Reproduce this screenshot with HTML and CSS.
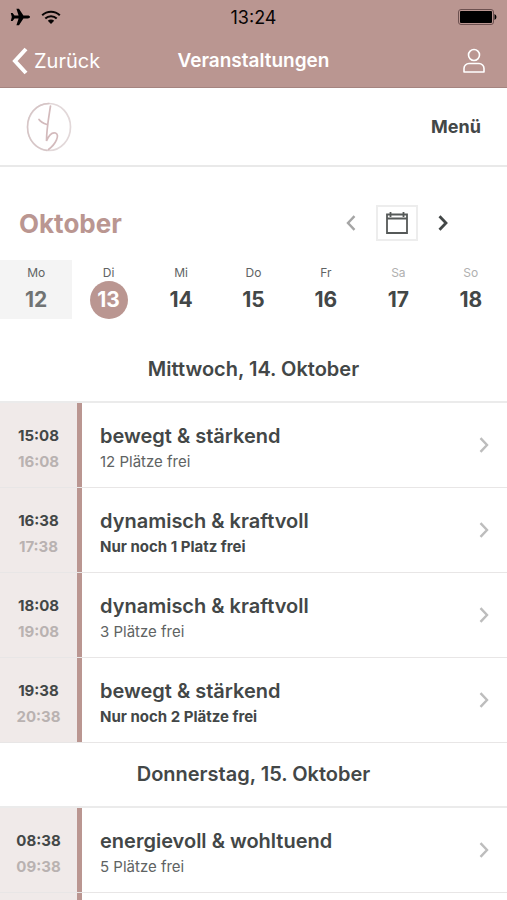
FILE: index.html
```html
<!DOCTYPE html>
<html lang="de">
<head>
<meta charset="utf-8">
<meta name="viewport" content="width=device-width, initial-scale=1">
<title>Veranstaltungen</title>
<link rel="stylesheet" href="styles.css">
</head>
<body>
<header class="app-header">
  <div class="status-bar">
    <div class="status-icons">
      <svg width="21" height="18" viewBox="0 0 21 18" aria-hidden="true"><path d="M20 9c0-.8-1-1.400-2.200-1.400h-4.400L9 .8H6.400l2.200 6.800H4.500L2.600 5H.8l1 4-1 4h1.800l1.900-2.600h4.100L6.400 17.200H9l4.400-6.800h4.400C19 10.400 20 9.800 20 9z"/></svg>
      <svg width="20" height="16" viewBox="0 0 20 16" fill="none" stroke="#080404" stroke-width="2" aria-hidden="true"><path d="M1.200 6.300a12.500 12.500 0 0 1 17.600 0M4.300 9.500a8.100 8.100 0 0 1 11.400 0"/><path d="M10 15l-3.200-3.300a4.600 4.600 0 0 1 6.400 0z" fill="#080404" stroke="none"/></svg>
    </div>
    <span class="clock">13:24</span>
    <svg class="battery" width="39" height="16" viewBox="0 0 39 16" aria-hidden="true"><rect x=".5" y=".5" width="35" height="15" rx="2.500" fill="none" stroke="#6d5150"/><rect x="2" y="2" width="32" height="12" rx="1"/><path d="M36.500 5q2 1 2 3t-2 3z"/></svg>
  </div>
  <nav class="nav-bar">
    <a class="back" href="#">
      <svg width="16" height="28" viewBox="0 0 16 28" fill="none" stroke="#fff" stroke-width="4" aria-hidden="true"><path d="M14 2L3 14l11 12"/></svg>
      Zurück
    </a>
    <h1 class="nav-title">Veranstaltungen</h1>
    <button class="profile" type="button" aria-label="Profil">
      <svg width="22" height="26" viewBox="0 0 22 26" fill="none" stroke="#fff" stroke-width="1.600" aria-hidden="true"><circle cx="11" cy="7" r="5.500"/><path d="M1 24v-3.500A5 5 0 0 1 6 15.500h10a5 5 0 0 1 5 5V24z" stroke-linejoin="round"/></svg>
    </button>
  </nav>
</header>

<div class="site-header">
  <a class="logo" href="#" aria-label="Startseite">
    <svg width="46" height="50" viewBox="0 0 46 50" fill="none" stroke-linecap="round" aria-hidden="true"><ellipse cx="23" cy="25" rx="21.500" ry="23.500" stroke="#e2d8d9" stroke-width="1.700"/><path d="M23 1.500C9 2 1.500 13 1.500 25S9 47 21 48.500" stroke="#d6c5c6" stroke-width="1.300"/><path d="M24.500 4C23 14 20.500 27 20.500 39c2-5 5.500-9 9-8 4.500 2 .5 11-7 16.500M13 17.500c2 3 5 4 8 5" stroke="#d3babc" stroke-width="1.700"/></svg>
  </a>
  <button class="menu" type="button">Menü</button>
</div>

<main class="schedule">
  <div class="month-bar">
    <h2 class="month">Oktober</h2>
    <div class="month-controls">
      <button class="step step-prev" type="button" aria-label="Vorherige Woche"><svg width="10" height="16" viewBox="0 0 10 16" fill="none" stroke="currentColor" stroke-width="2.400" aria-hidden="true"><path d="M8.500 1.200L2 8l6.500 6.800"/></svg></button>
      <button class="calendar" type="button" aria-label="Kalender"><svg width="22" height="22" viewBox="0 0 22 22" fill="none" stroke="#555958" stroke-width="1.800" aria-hidden="true"><path d="M1 2.500h20V21H1zM1 6.500h20M4.500 0v5M17.500 0v5"/></svg></button>
      <button class="step" type="button" aria-label="Nächste Woche"><svg width="10" height="16" viewBox="0 0 10 16" fill="none" stroke="currentColor" stroke-width="2.800" aria-hidden="true"><path d="M1.500 1.200L8 8l-6.500 6.800"/></svg></button>
    </div>
  </div>

  <div class="week">
    <button class="day past" type="button"><span class="weekday">Mo</span><span class="date">12</span></button>
    <button class="day today" type="button"><span class="weekday">Di</span><span class="date">13</span></button>
    <button class="day" type="button"><span class="weekday">Mi</span><span class="date">14</span></button>
    <button class="day" type="button"><span class="weekday">Do</span><span class="date">15</span></button>
    <button class="day" type="button"><span class="weekday">Fr</span><span class="date">16</span></button>
    <button class="day weekend" type="button"><span class="weekday">Sa</span><span class="date">17</span></button>
    <button class="day weekend" type="button"><span class="weekday">So</span><span class="date">18</span></button>
  </div>

  <h3 class="date-heading first">Mittwoch, 14. Oktober</h3>
  <a class="event" href="#">
    <span class="times"><time>15:08</time><time class="end">16:08</time></span>
    <span class="details"><span class="name">bewegt &amp; stärkend</span><span class="seats">12 Plätze frei</span></span>
    <svg class="arrow" width="10" height="16" viewBox="0 0 10 16" aria-hidden="true"><path d="M1.500 1.200L8 8l-6.500 6.800"/></svg>
  </a>
  <a class="event" href="#">
    <span class="times"><time>16:38</time><time class="end">17:38</time></span>
    <span class="details"><span class="name">dynamisch &amp; kraftvoll</span><span class="seats few">Nur noch 1 Platz frei</span></span>
    <svg class="arrow" width="10" height="16" viewBox="0 0 10 16" aria-hidden="true"><path d="M1.500 1.200L8 8l-6.500 6.800"/></svg>
  </a>
  <a class="event" href="#">
    <span class="times"><time>18:08</time><time class="end">19:08</time></span>
    <span class="details"><span class="name">dynamisch &amp; kraftvoll</span><span class="seats">3 Plätze frei</span></span>
    <svg class="arrow" width="10" height="16" viewBox="0 0 10 16" aria-hidden="true"><path d="M1.500 1.200L8 8l-6.500 6.800"/></svg>
  </a>
  <a class="event" href="#">
    <span class="times"><time>19:38</time><time class="end">20:38</time></span>
    <span class="details"><span class="name">bewegt &amp; stärkend</span><span class="seats few">Nur noch 2 Plätze frei</span></span>
    <svg class="arrow" width="10" height="16" viewBox="0 0 10 16" aria-hidden="true"><path d="M1.500 1.200L8 8l-6.500 6.800"/></svg>
  </a>

  <h3 class="date-heading">Donnerstag, 15. Oktober</h3>
  <a class="event" href="#">
    <span class="times"><time>08:38</time><time class="end">09:38</time></span>
    <span class="details"><span class="name">energievoll &amp; wohltuend</span><span class="seats">5 Plätze frei</span></span>
    <svg class="arrow" width="10" height="16" viewBox="0 0 10 16" aria-hidden="true"><path d="M1.500 1.200L8 8l-6.500 6.800"/></svg>
  </a>
  <div class="list-end"><span class="times"></span></div>
</main>
</body>
</html>
```
FILE: styles.css
```css
* {
  box-sizing: border-box;
}

body {
  margin: 0;
  min-height: 100vh;
  display: flex;
  flex-direction: column;
  background: #fff;
  color: #434747;
  font-family: Inter, "Liberation Sans", sans-serif;
}

button {
  padding: 0;
  border: 0;
  background: none;
  color: inherit;
  font: inherit;
}

a {
  color: inherit;
  text-decoration: none;
}

svg {
  display: block;
}

h1,
h2,
h3 {
  margin: 0;
}

.app-header {
  background: #ba9691;
  border-bottom: 1px solid #a58480;
}

.status-bar,
.nav-bar {
  display: grid;
  grid-template-columns: 1fr auto 1fr;
  align-items: center;
  padding: 0 10px;
}

.status-bar {
  height: 34px;
  color: #080404;
}

.status-icons {
  display: flex;
  align-items: center;
  gap: 10px;
}

.clock {
  font-size: 18px;
}

.battery {
  justify-self: end;
}

.nav-bar {
  height: 53px;
  color: #fff;
}

.back {
  display: flex;
  align-items: center;
  gap: 6px;
  padding-left: 2px;
  font-size: 20px;
}

.nav-title {
  font-size: 19px;
  font-weight: 600;
}

.profile {
  justify-self: end;
  padding-right: 12px;
}

.site-header {
  display: flex;
  align-items: center;
  justify-content: space-between;
  height: 79px;
  padding: 0 26px;
  border-bottom: 2px solid #e9e9e9;
}

.menu {
  font-size: 18px;
  font-weight: 700;
}

.schedule {
  flex: 1;
  display: flex;
  flex-direction: column;
}

.month-bar {
  display: flex;
  align-items: center;
  justify-content: space-between;
  padding: 38px 53px 19px 19px;
}

.month {
  color: #ba9691;
  font-size: 26px;
  font-weight: 700;
}

.month-controls {
  display: flex;
  align-items: center;
  gap: 14px;
}

.step {
  padding: 6px;
}

.step-prev {
  color: #a5a5a5;
}

.calendar {
  display: grid;
  place-items: center;
  width: 42px;
  height: 36px;
  border: 2px solid #ededed;
}

.week {
  display: grid;
  grid-template-columns: repeat(7, 1fr);
}

.day {
  display: flex;
  flex-direction: column;
  align-items: center;
  padding-top: 4px;
}

.weekday {
  color: #606363;
  font-size: 12px;
  line-height: 17px;
}

.date {
  width: 38px;
  border-radius: 50%;
  font-size: 21px;
  font-weight: 700;
  line-height: 38px;
}

.past {
  background: #f4f4f4;
}

.past .date {
  color: #707373;
}

.today .date {
  background: #ba9691;
  color: #fff;
}

.weekend .weekday {
  color: #b0b0b0;
}

.date-heading {
  padding: 18px 0;
  border-bottom: 2px solid #ebebeb;
  font-size: 20px;
  font-weight: 600;
  line-height: 27px;
  text-align: center;
}

.date-heading.first {
  margin-top: 19px;
}

.event {
  display: flex;
  align-items: center;
  padding-right: 18px;
  border-bottom: 1px solid #e8e6e6;
}

.times,
.details {
  display: flex;
  flex-direction: column;
  padding-top: 20px;
  padding-bottom: 12px;
  line-height: 26px;
}

.times {
  width: 82px;
  border-right: 5px solid #ba9691;
  background: #f0eae9;
  font-size: 15px;
  font-weight: 700;
  text-align: center;
}

.end {
  color: #b9b2b1;
}

.details {
  flex: 1;
  padding-left: 18px;
}

.name {
  font-size: 20px;
  font-weight: 600;
}

.seats {
  color: #606363;
  font-size: 15px;
}

.seats.few {
  color: #434747;
  font-weight: 700;
}

.arrow {
  fill: none;
  stroke: #bdbdbd;
  stroke-width: 2.4;
}

.list-end {
  flex: 1;
  display: flex;
}

.list-end .times {
  padding: 0;
}
```
